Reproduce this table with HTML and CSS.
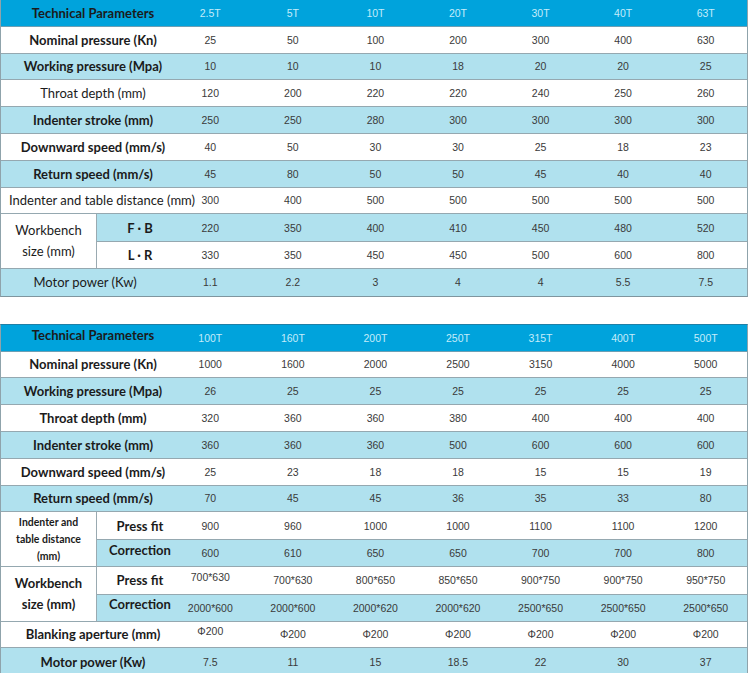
FILE: index.html
```html
<!DOCTYPE html>
<html>
<head>
<meta charset="utf-8">
<link rel="stylesheet" href="styles.css">
</head>
<body>
<div class="spec">
  <div class="row head">
    <div class="label b">Technical Parameters</div>
    <div class="v">2.5T</div><div class="v">5T</div><div class="v">10T</div><div class="v">20T</div><div class="v">30T</div><div class="v">40T</div><div class="v">63T</div>
  </div>
  <div class="row">
    <div class="label b">Nominal pressure (Kn)</div>
    <div class="v">25</div><div class="v">50</div><div class="v">100</div><div class="v">200</div><div class="v">300</div><div class="v">400</div><div class="v">630</div>
  </div>
  <div class="row lt">
    <div class="label b">Working pressure (Mpa)</div>
    <div class="v">10</div><div class="v">10</div><div class="v">10</div><div class="v">18</div><div class="v">20</div><div class="v">20</div><div class="v">25</div>
  </div>
  <div class="row">
    <div class="label m">Throat depth (mm)</div>
    <div class="v">120</div><div class="v">200</div><div class="v">220</div><div class="v">220</div><div class="v">240</div><div class="v">250</div><div class="v">260</div>
  </div>
  <div class="row lt">
    <div class="label b">Indenter stroke (mm)</div>
    <div class="v">250</div><div class="v">250</div><div class="v">280</div><div class="v">300</div><div class="v">300</div><div class="v">300</div><div class="v">300</div>
  </div>
  <div class="row">
    <div class="label b">Downward speed (mm/s)</div>
    <div class="v">40</div><div class="v">50</div><div class="v">30</div><div class="v">30</div><div class="v">25</div><div class="v">18</div><div class="v">23</div>
  </div>
  <div class="row lt">
    <div class="label b">Return speed (mm/s)</div>
    <div class="v">45</div><div class="v">80</div><div class="v">50</div><div class="v">50</div><div class="v">45</div><div class="v">40</div><div class="v">40</div>
  </div>
  <div class="row">
    <div class="label m wide">Indenter and table distance (mm)</div>
    <div class="v">300</div><div class="v">400</div><div class="v">500</div><div class="v">500</div><div class="v">500</div><div class="v">500</div><div class="v">500</div>
  </div>
  <div class="group">
    <div class="glabel m big">Workbench<br>size (mm)</div>
    <div class="subs">
      <div class="sub lt">
        <div class="slabel b">F · B</div>
        <div class="v">220</div><div class="v">350</div><div class="v">400</div><div class="v">410</div><div class="v">450</div><div class="v">480</div><div class="v">520</div>
      </div>
      <div class="sub">
        <div class="slabel b">L · R</div>
        <div class="v">330</div><div class="v">350</div><div class="v">450</div><div class="v">450</div><div class="v">500</div><div class="v">600</div><div class="v">800</div>
      </div>
    </div>
  </div>
  <div class="row lt">
    <div class="label m narrow">Motor power (Kw)</div>
    <div class="v">1.1</div><div class="v">2.2</div><div class="v">3</div><div class="v">4</div><div class="v">4</div><div class="v">5.5</div><div class="v">7.5</div>
  </div>
</div>

<div class="spec second">
  <div class="row head">
    <div class="label b up">Technical Parameters</div>
    <div class="v">100T</div><div class="v">160T</div><div class="v">200T</div><div class="v">250T</div><div class="v">315T</div><div class="v">400T</div><div class="v">500T</div>
  </div>
  <div class="row">
    <div class="label b">Nominal pressure (Kn)</div>
    <div class="v">1000</div><div class="v">1600</div><div class="v">2000</div><div class="v">2500</div><div class="v">3150</div><div class="v">4000</div><div class="v">5000</div>
  </div>
  <div class="row lt">
    <div class="label b">Working pressure (Mpa)</div>
    <div class="v">26</div><div class="v">25</div><div class="v">25</div><div class="v">25</div><div class="v">25</div><div class="v">25</div><div class="v">25</div>
  </div>
  <div class="row">
    <div class="label b">Throat depth (mm)</div>
    <div class="v">320</div><div class="v">360</div><div class="v">360</div><div class="v">380</div><div class="v">400</div><div class="v">400</div><div class="v">400</div>
  </div>
  <div class="row lt">
    <div class="label b">Indenter stroke (mm)</div>
    <div class="v">360</div><div class="v">360</div><div class="v">360</div><div class="v">500</div><div class="v">600</div><div class="v">600</div><div class="v">600</div>
  </div>
  <div class="row">
    <div class="label b">Downward speed (mm/s)</div>
    <div class="v">25</div><div class="v">23</div><div class="v">18</div><div class="v">18</div><div class="v">15</div><div class="v">15</div><div class="v">19</div>
  </div>
  <div class="row lt">
    <div class="label b">Return speed (mm/s)</div>
    <div class="v">70</div><div class="v">45</div><div class="v">45</div><div class="v">36</div><div class="v">35</div><div class="v">33</div><div class="v">80</div>
  </div>
  <div class="group">
    <div class="glabel b small">Indenter and<br>table distance<br>(mm)</div>
    <div class="subs">
      <div class="sub">
        <div class="slabel b">Press fit</div>
        <div class="v">900</div><div class="v">960</div><div class="v">1000</div><div class="v">1000</div><div class="v">1100</div><div class="v">1100</div><div class="v">1200</div>
      </div>
      <div class="sub lt">
        <div class="slabel b up">Correction</div>
        <div class="v">600</div><div class="v">610</div><div class="v">650</div><div class="v">650</div><div class="v">700</div><div class="v">700</div><div class="v">800</div>
      </div>
    </div>
  </div>
  <div class="group">
    <div class="glabel b big">Workbench<br>size (mm)</div>
    <div class="subs">
      <div class="sub">
        <div class="slabel b">Press fit</div>
        <div class="v up">700*630</div><div class="v">700*630</div><div class="v">800*650</div><div class="v">850*650</div><div class="v">900*750</div><div class="v">900*750</div><div class="v">950*750</div>
      </div>
      <div class="sub lt">
        <div class="slabel b up">Correction</div>
        <div class="v">2000*600</div><div class="v">2000*600</div><div class="v">2000*620</div><div class="v">2000*620</div><div class="v">2500*650</div><div class="v">2500*650</div><div class="v">2500*650</div>
      </div>
    </div>
  </div>
  <div class="row">
    <div class="label b">Blanking aperture (mm)</div>
    <div class="v up">Φ200</div><div class="v">Φ200</div><div class="v">Φ200</div><div class="v">Φ200</div><div class="v">Φ200</div><div class="v">Φ200</div><div class="v">Φ200</div>
  </div>
  <div class="row lt">
    <div class="label b">Motor power (Kw)</div>
    <div class="v">7.5</div><div class="v">11</div><div class="v">15</div><div class="v">18.5</div><div class="v">22</div><div class="v">30</div><div class="v">37</div>
  </div>
</div>
</body>
</html>
```

FILE: styles.css
```css
* { box-sizing: border-box; }
html, body { margin: 0; padding: 0; background: #ffffff; }

.spec {
  width: 748px;
  border-left: 1px solid #8fa3ab;
  border-right: 1px solid #8fa3ab;
  border-bottom: 1px solid #7f959e;
  background: #ffffff;
}
.second {
  margin-top: 27px;
  border-top: 1px solid #1f7fa6;
}

.row {
  display: grid;
  grid-template-columns: 168px repeat(7, 1fr);
  height: 26.8px;
  border-bottom: 1px solid #95a8b0;
  background: #ffffff;
}
.row:last-child { border-bottom: none; }
.lt { background: #b0e1ee; }
.head {
  background: #00a3dc;
  border-bottom: 1px solid #6c9fb4;
}

.label {
  display: flex;
  align-items: center;
  justify-content: center;
  padding-left: 16px;
  white-space: nowrap;
  font-family: "Lato", "Liberation Sans", sans-serif;
  font-size: 13px;
  color: #1b1b1b;
}
.b { font-weight: 700; }
.m { font-weight: 400; }
.label.up { padding-bottom: 6px; }
.label.wide { padding-left: 34px; }
.label.narrow { padding-left: 0; }

.v {
  display: flex;
  align-items: center;
  justify-content: center;
  font-family: "Liberation Sans", Arial, sans-serif;
  font-size: 10.5px;
  color: #3a3a3a;
  white-space: nowrap;
}
.head .v { color: #c4ecfa; }
.v.up { padding-bottom: 7px; }

.group {
  display: grid;
  grid-template-columns: 96px 1fr;
  border-bottom: 1px solid #95a8b0;
}
.glabel {
  display: flex;
  align-items: center;
  justify-content: center;
  text-align: center;
  border-right: 1px solid #9aaab1;
  background: #ffffff;
  font-family: "Lato", "Liberation Sans", sans-serif;
  color: #1b1b1b;
}
.glabel.big { font-size: 13px; line-height: 21px; }
.glabel.small { font-size: 10.5px; line-height: 17px; }

.sub {
  display: grid;
  grid-template-columns: 72px repeat(7, 1fr);
  height: 26.8px;
  background: #ffffff;
}
.sub + .sub { border-top: 1px solid #95a8b0; }
.sub.lt { background: #b0e1ee; }

.slabel {
  display: flex;
  align-items: center;
  justify-content: center;
  padding-left: 14px;
  white-space: nowrap;
  font-family: "Lato", "Liberation Sans", sans-serif;
  font-size: 13px;
  color: #1b1b1b;
}
.slabel.up { padding-bottom: 7px; }
```
